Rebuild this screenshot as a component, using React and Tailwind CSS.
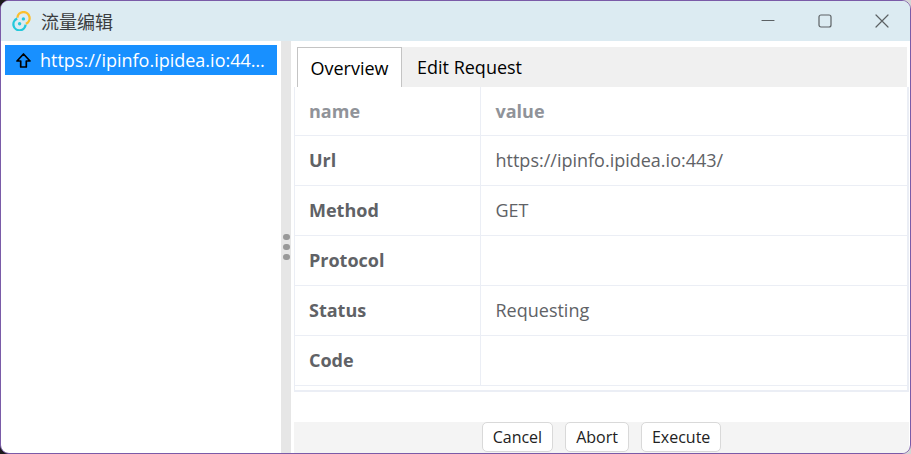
import React from 'react';

const rows = [
  ['Url', 'https://ipinfo.ipidea.io:443/'],
  ['Method', 'GET'],
  ['Protocol', ''],
  ['Status', 'Requesting'],
  ['Code', ''],
];

function Logo() {
  return (
    <svg className="size-5" viewBox="0 0 20 20" fill="none" aria-hidden="true">
      <path d="M6.4 6.8A6.1 6.1 0 1 1 14.8 12.8" stroke="#fbbf2d" strokeWidth="2.3" />
      <path d="M14.6 13.7A6.1 6.1 0 1 1 6.2 7.6" stroke="#24c8db" strokeWidth="2.3" />
      <circle cx="12.4" cy="7.9" r="1.7" fill="#24c8db" />
      <circle cx="8.6" cy="12.8" r="1.7" fill="#24c8db" />
    </svg>
  );
}

function WindowButton({ label, children }) {
  return (
    <button type="button" aria-label={label} className="flex h-10 w-[57px] items-center justify-center">
      <svg className="size-[14px]" viewBox="0 0 14 14" fill="none" stroke="#5c6164" strokeWidth="1.2" strokeLinecap="round">
        {children}
      </svg>
    </button>
  );
}

function TitleBar() {
  return (
    <header className="flex h-10 shrink-0 items-center bg-[#dcebf2] pl-[10px]">
      <Logo />
      <h1 className="ml-[10px] flex-1 font-['Noto_Sans_CJK_SC',sans-serif] text-[18px] leading-6 font-normal text-[#3a3d3f]">流量编辑</h1>
      <WindowButton label="Minimize">
        <path d="M1 6.5h12" />
      </WindowButton>
      <WindowButton label="Maximize">
        <rect x="1" y="1" width="12" height="12" rx="2" />
      </WindowButton>
      <WindowButton label="Close">
        <path d="M1 1l12 12M13 1L1 13" />
      </WindowButton>
    </header>
  );
}

function Sidebar() {
  return (
    <aside className="w-[280px] shrink-0 p-1">
      <button type="button" className="flex h-[30px] w-full items-center bg-[#1890ff] pr-3 pl-[11px] text-left text-[18px] leading-6 text-white">
        <svg className="mr-[9px] size-[15px] shrink-0" viewBox="0 0 15 15" fill="none" stroke="#000" strokeWidth="1.7" strokeLinejoin="round" aria-hidden="true">
          <path d="M7.5 1L14 8H10.3V14H4.7V8H1Z" />
        </svg>
        <span className="truncate">https://ipinfo.ipidea.io:443/</span>
      </button>
    </aside>
  );
}

function Splitter() {
  return (
    <div role="separator" aria-orientation="vertical" className="flex w-[10px] shrink-0 flex-col items-center justify-center gap-1 bg-[#e6e6e6]">
      <span className="h-[6px] w-[7px] rounded-full bg-[#999]" />
      <span className="h-[6px] w-[7px] rounded-full bg-[#999]" />
      <span className="h-[6px] w-[7px] rounded-full bg-[#999]" />
    </div>
  );
}

function Tabs() {
  return (
    <div role="tablist" className="mr-[2px] ml-[3px] flex h-10 shrink-0 bg-[#f0f0f0] text-[18px] leading-6 text-black">
      <button type="button" role="tab" aria-selected="true" className="w-[105px] border border-b-0 border-[#c4c4c4] bg-white">
        Overview
      </button>
      <button type="button" role="tab" aria-selected="false" className="px-[15px]">
        Edit Request
      </button>
    </div>
  );
}

function Overview() {
  return (
    <div className="border-r-2 border-b-2 border-l border-[#ebeef5] pb-1">
      <table className="w-full table-fixed border-collapse text-left text-[18px] leading-6 text-[#606266]">
        <thead>
          <tr className="h-12 border-b border-[#ebeef5] text-[#909399]">
            <th scope="col" className="w-[185px] border-r border-[#ebeef5] px-[14px] font-bold">name</th>
            <th scope="col" className="px-[15px] font-bold">value</th>
          </tr>
        </thead>
        <tbody>
          {rows.map(([name, value]) => (
            <tr key={name} className="h-[50px] border-b border-[#ebeef5]">
              <th scope="row" className="border-r border-[#ebeef5] px-[14px] font-bold">{name}</th>
              <td className="px-[15px]">{value}</td>
            </tr>
          ))}
        </tbody>
      </table>
    </div>
  );
}

function Actions() {
  return (
    <footer className="mt-auto flex h-[31px] shrink-0 items-start justify-center gap-3 bg-[#f4f4f4]">
      {['Cancel', 'Abort', 'Execute'].map((label) => (
        <button key={label} type="button" className="h-[30px] rounded-[5px] border border-[#d9d9d9] bg-white px-[10px] text-[16px] leading-6 text-[#222]">
          {label}
        </button>
      ))}
    </footer>
  );
}

export default function App() {
  return (
    <div className="h-screen bg-linear-to-r from-[#1b1b1b] from-50% to-[#d5d5d5] to-50% font-['Open_Sans','Noto_Sans_CJK_SC',sans-serif]">
      <div className="flex h-full flex-col overflow-hidden rounded-[9px] border border-[#7a5ba8] bg-white">
        <TitleBar />
        <div className="flex min-h-0 flex-1">
          <Sidebar />
          <Splitter />
          <main className="flex min-w-0 flex-1 flex-col pt-[6px] pr-px pl-[3px]">
            <Tabs />
            <Overview />
            <Actions />
          </main>
        </div>
      </div>
    </div>
  );
}
